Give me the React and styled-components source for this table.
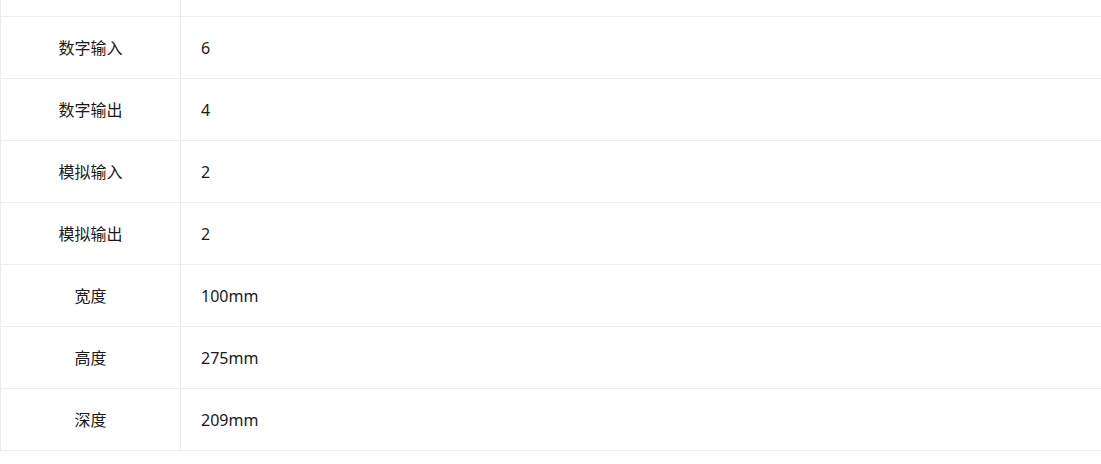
import React from 'react';
import styled, { createGlobalStyle } from 'styled-components';

const GlobalStyle = createGlobalStyle`
    html, body {
        margin: 0;
        padding: 0;
        background: #fff;
        overflow: hidden;
    }
    body {
        font-family: "Noto Sans", "Noto Sans CJK SC", sans-serif;
        color: #333;
    }
`;

// spec rows of the product parameter table
const specs = [
    { label: '数字输入', value: '6' },
    { label: '数字输出', value: '4' },
    { label: '模拟输入', value: '2' },
    { label: '模拟输出', value: '2' },
    { label: '宽度', value: '100mm' },
    { label: '高度', value: '275mm' },
    { label: '深度', value: '209mm' },
];

const App = () => {
    return (
        <>
            <GlobalStyle />
            <Table>
                <Row height={16}>
                    <Label />
                    <Value />
                </Row>
                {specs.map((spec) => (
                    <Row key={spec.label} height={61}>
                        <Label>{spec.label}</Label>
                        <Value>{spec.value}</Value>
                    </Row>
                ))}
            </Table>
        </>
    );
};

export default App;

const Table = styled.div`
    display: flex;
    flex-direction: column;
    width: 100%;
    border-left: 1px solid #ececec;
    box-sizing: border-box;
`;

const Row = styled.div`
    display: grid;
    grid-template-columns: 180px 1fr;
    height: ${(props) => props.height}px;
    border-bottom: 1px solid #ececec;
`;

const Label = styled.div`
    display: flex;
    align-items: center;
    justify-content: center;
    border-right: 1px solid #ececec;
    font-size: 16px;
    line-height: 20px;
    color: #1a1a1a;
`;

const Value = styled.div`
    display: flex;
    align-items: center;
    padding-left: 20px;
    font-size: 16px;
    line-height: 20px;
    color: #1a1a1a;
`;
